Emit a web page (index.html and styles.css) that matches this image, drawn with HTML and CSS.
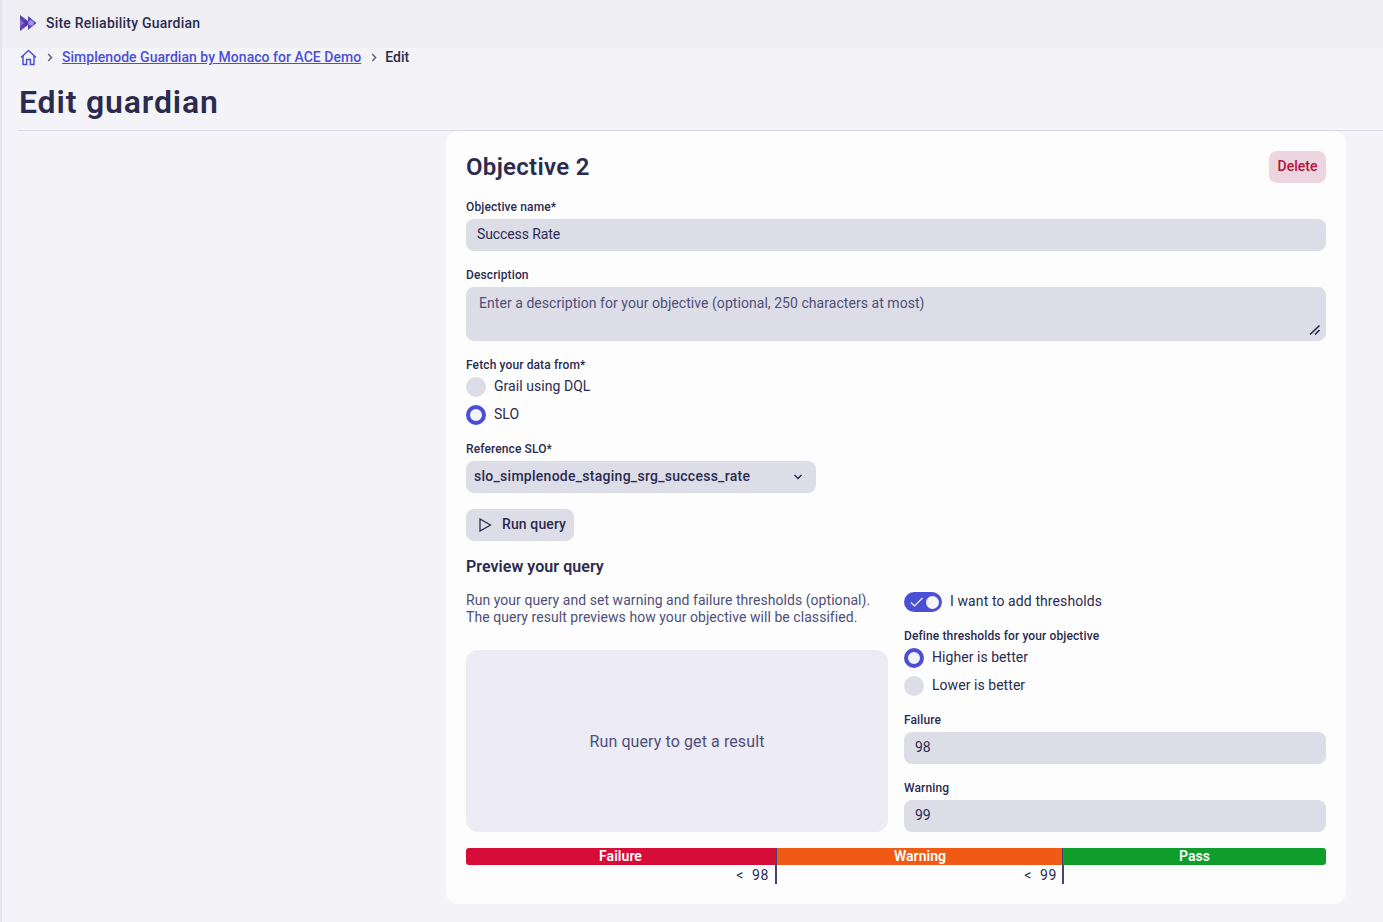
FILE: index.html

```html
<!DOCTYPE html>
<html>
<head>
 <title>Edit guardian</title>
<link rel="stylesheet" href="styles.css">
</head>
<body>
<header class="topbar">
  <svg class="applogo" width="18" height="18" viewBox="0 0 18 18">
    <path d="M1 1 L9 7 V2 L17.500 9 L9 16 V11 L1 17 Z" fill="#5b3fb5"/>
    <path d="M1 5 L5 9 L1 13 Z" fill="#8468d8"/>
    <path d="M6 6 L9 9 L6 12 Z" fill="#4a2fa0"/>
    <circle cx="12" cy="9" r="2.800" fill="#a491ea"/>
  </svg>
  <span class="appname">Site Reliability Guardian</span>
</header>

<nav class="crumbs">
  <svg class="home" width="17" height="17" viewBox="0 0 17 17" fill="none" stroke="#4b4fd6" stroke-width="1.500">
    <path d="M1 8.500 L8.500 1.500 L16 8.500"/>
    <path d="M3 6.800 V15.500 H6.600 V10.500 H10.400 V15.500 H14 V6.800"/>
  </svg>
  <svg class="sep" width="6" height="9" viewBox="0 0 6 9" fill="none" stroke="#5c5c7e" stroke-width="1.400"><path d="M1.200 1 L4.600 4.500 L1.200 8"/></svg>
  <a href="#">Simplenode Guardian by Monaco for ACE Demo</a>
  <svg class="sep" width="6" height="9" viewBox="0 0 6 9" fill="none" stroke="#5c5c7e" stroke-width="1.400"><path d="M1.200 1 L4.600 4.500 L1.200 8"/></svg>
  <span>Edit</span>
</nav>

<h1 class="pagetitle">Edit guardian</h1>

<main class="card">
  <div class="cardhead">
    <h2>Objective 2</h2>
    <button class="btn-delete">Delete</button>
  </div>

  <label class="lbl lbl-name">Objective name*</label>
  <div class="input">Success Rate</div>

  <label class="lbl lbl-desc">Description</label>
  <div class="textarea">Enter a description for your objective (optional, 250 characters at most)
    <svg class="grip" width="12" height="12" viewBox="0 0 12 12" stroke="#2b2b4f" stroke-width="1.700"><path d="M1 10.500 L10.500 1.500"/><path d="M6 10.500 L10.500 6"/></svg>
  </div>

  <label class="lbl lbl-fetch">Fetch your data from*</label>
  <div class="radio"><i class="dot"></i>Grail using DQL</div>
  <div class="radio"><i class="dot on"></i>SLO</div>

  <label class="lbl lbl-ref">Reference SLO*</label>
  <div class="select">slo_simplenode_staging_srg_success_rate
    <svg width="10" height="6" viewBox="0 0 10 6" fill="none" stroke="#2b2b4f" stroke-width="1.500"><path d="M1.500 1 L5 4.500 L8.500 1"/></svg>
  </div>

  <button class="btn-run">
    <svg width="14" height="14" viewBox="0 0 14 14" fill="none" stroke="#2b2b4f" stroke-width="1.300"><path d="M2 1 L12.500 7 L2 13 Z"/></svg>
    Run query
  </button>

  <h3>Preview your query</h3>

  <div class="cols">
    <div>
      <p class="hint">Run your query and set warning and failure thresholds (optional).<br>The query result previews how your objective will be classified.</p>
      <div class="empty">Run query to get a result</div>
    </div>
    <div>
      <div class="toggle-row">
        <span class="toggle">
          <svg width="14" height="10" viewBox="0 0 14 10" fill="none" stroke="#f4f4fa" stroke-width="1.200"><path d="M1 5.500 L4.500 9 L12.500 1"/></svg>
          <i></i>
        </span>
        I want to add thresholds
      </div>
      <label class="lbl lbl-def">Define thresholds for your objective</label>
      <div class="radio"><i class="dot on"></i>Higher is better</div>
      <div class="radio"><i class="dot"></i>Lower is better</div>
      <label class="lbl lbl-fail">Failure</label>
      <div class="input">98</div>
      <label class="lbl lbl-warn">Warning</label>
      <div class="input">99</div>
    </div>
  </div>

  <div class="bar">
    <div class="seg seg-fail"><span class="seg-text">Failure</span><span class="mark">&lt;&nbsp; 98</span></div>
    <div class="seg seg-warn">Warning<span class="mark">&lt;&nbsp; 99</span></div>
    <div class="seg seg-pass">Pass</div>
  </div>
</main>
</body>
</html>
```

FILE: styles.css

```css
* { box-sizing: border-box; }
html, body { margin: 0; }
body { background: #f4f4f8; color: #2b2b4f; font-family: Roboto, sans-serif; font-size: 14px; height: 922px; overflow: hidden; border-left: 2px solid #e3e3ec; letter-spacing: .05px; }
.topbar { height: 48px; background: #eeeef3; display: flex; align-items: center; gap: 9px; margin-left: -2px; padding: 0 0 2px 19px; }
.appname { font-size: 14px; font-weight: 500; letter-spacing: .22px; }
.crumbs { height: 18px; margin-left: 18px; display: flex; align-items: center; font-weight: 500; letter-spacing: .03px; }
.crumbs a { color: #4b4fd6; margin: 0 10px 0 0; }
.crumbs .home { margin-right: 10px; }
.crumbs .sep { margin-right: 9px; }
.crumbs a + .sep { margin-right: 8px; }
.pagetitle { margin: 0 0 0 16px; height: 65px; padding: 16px 0 0 1px; font-size: 32px; line-height: 40px; font-weight: 600; letter-spacing: .85px; border-bottom: 1px solid #d8d8e4; }
.card { width: 900px; height: 773px; margin-left: 444px; background: #fdfdfe; border-radius: 12px; padding: 20px 20px 0 20px; }
.cardhead { display: flex; justify-content: space-between; height: 32px; align-items: center; }
.cardhead h2 { margin: 0; font-size: 24px; font-weight: 600; letter-spacing: .3px; }
.btn-delete { width: 57px; height: 32px; border: 0; border-radius: 8px; background: #ecd5df; color: #b3123f; font: 500 14px Roboto, sans-serif; padding: 0 0 2px; }
.lbl { display: block; font-size: 12px; line-height: 16px; font-weight: 500; margin-bottom: 4px; letter-spacing: .12px; }
.lbl-name { margin-top: 16px; }
.lbl-desc { margin-top: 16px; }
.lbl-fetch { margin-top: 16px; margin-bottom: 0; }
.lbl-ref { margin-top: 16px; }
.lbl-def { margin-top: 16px; margin-bottom: 0; }
.lbl-fail { margin-top: 16px; }
.lbl-warn { margin-top: 16px; }
.input { height: 32px; line-height: 30px; background: #dddde8; border-radius: 8px; padding-left: 11px; letter-spacing: -.1px; }
.textarea { position: relative; height: 54px; background: #dddde8; border-radius: 8px; padding: 7px 13px; color: #4f4f78; line-height: 18px; }
.grip { position: absolute; right: 5px; bottom: 5px; }
.radio { display: flex; align-items: flex-start; height: 20px; line-height: 18px; gap: 8px; margin-bottom: 8px; }
.radio:last-of-type { margin-bottom: 0; }
.dot { width: 20px; height: 20px; border-radius: 50%; background: #dddde8; flex: none; }
.dot.on { background: #f4f4f8; border: 4px solid #4b4fd6; }
.lbl-fetch + .radio, .lbl-def + .radio { margin-top: 4px; }
.select { width: 350px; height: 32px; background: #dddde8; border-radius: 8px; padding: 0 13px 2px 8px; display: flex; align-items: center; justify-content: space-between; font-weight: 500; letter-spacing: .27px; }
.select svg { margin-top: 2px; }
.btn-run { display: flex; align-items: center; gap: 10px; margin-top: 16px; width: 108px; height: 32px; border: 0; border-radius: 8px; background: #dddde8; color: #2b2b4f; font: 500 14px Roboto, sans-serif; letter-spacing: .12px; padding: 0 0 2px 12px; }
.btn-run svg { margin-top: 2px; }
h3 { margin: 16px 0 0; font-size: 16px; line-height: 20px; font-weight: 600; letter-spacing: .05px; }
.cols { display: grid; grid-template-columns: 422px 422px; gap: 16px; margin-top: 14px; }
.hint { margin: 1px 0 0; height: 42px; color: #4f4f78; line-height: 17px; }
.empty { margin-top: 16px; height: 182px; background: #ecebf6; border-radius: 12px; display: flex; align-items: center; justify-content: center; font-size: 16px; color: #4f4f78; letter-spacing: .1px; }
.toggle-row { display: flex; align-items: flex-start; gap: 8px; height: 20px; line-height: 18px; margin-top: 1px; letter-spacing: .1px; }
.toggle { width: 38px; height: 20px; border-radius: 10px; background: #4b4fd6; display: flex; align-items: center; padding: 0 3px 0 6px; justify-content: space-between; }
.toggle i { width: 13px; height: 13px; border-radius: 50%; background: #f4f4fa; }
.bar { display: flex; margin-top: 16px; height: 17px; border-radius: 3px; }
.seg { position: relative; color: #fff; text-align: center; font-size: 14px; font-weight: 600; line-height: 17px; }
.seg-text { margin-right: 2px; }
.seg-fail { width: 311px; background: #d70c38; border-radius: 3px 0 0 3px; }
.seg-warn { width: 286px; background: #f05a14; }
.seg-pass { flex: 1; background: #0f9d2b; border-radius: 0 3px 3px 0; }
.mark { position: absolute; right: -1px; top: 0; height: 36px; padding: 18px 5px 0 0; border-right: 2px solid #45456f; color: #2b2b4f; font-weight: 400; white-space: nowrap; line-height: 18px; letter-spacing: .6px; }
.seg-fail .mark { right: 0; padding-right: 6px; }
```
